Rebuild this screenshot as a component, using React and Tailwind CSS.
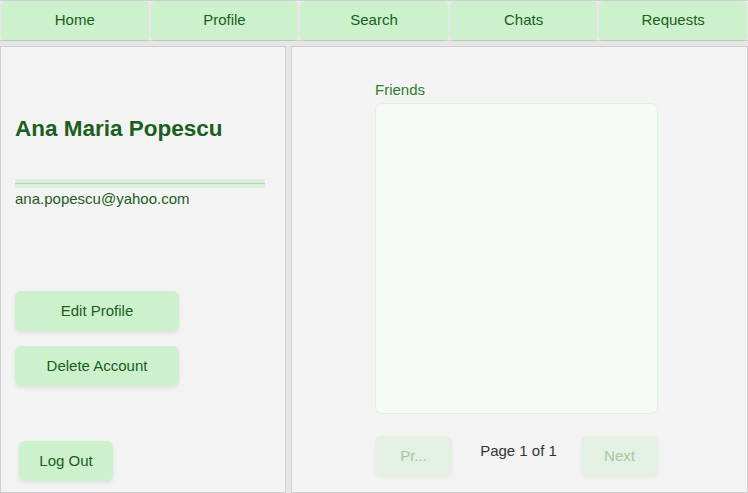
import React from 'react';

const navItems = ['Home', 'Profile', 'Search', 'Chats', 'Requests'];

export default function App() {
  return (
    <div className="h-[493px] overflow-hidden flex flex-col bg-[#f3f3f3] font-['Liberation_Sans',Arial,sans-serif] text-[15px]">
      <nav className="flex gap-[2px] px-px h-[41px] border-y border-[#cfcfcf] bg-[#ececec]">
        {navItems.map((item) => (
          <button
            key={item}
            className="flex-1 bg-[#ccf1cc] text-[#1b5e20] rounded-[5px] shadow-[0_1px_2px_rgba(0,0,0,0.08)]"
          >
            {item}
          </button>
        ))}
      </nav>

      <div className="flex-1 flex gap-[5px] pt-[5px] bg-[#e6e6e6]">
        {/* profile side */}
        <div className="w-[286px] border border-[#cfcfcf] bg-[#f3f3f3] pl-[14px] pt-[68px] flex flex-col">
          <h2 className="text-[22.5px] font-bold text-[#1b5e20] leading-[28px]">Ana Maria Popescu</h2>
          <div className="mt-[36px] w-[250px] h-[9px] bg-[#d9f2d9] flex items-center">
            <div className="w-full h-px bg-[#c8c8c8]" />
          </div>
          <p className="mt-[2px] text-[#1b5e20] leading-[18px]">ana.popescu@yahoo.com</p>

          <div className="mt-[83px] flex flex-col gap-[15px] items-start">
            <button className="w-[164px] h-[40px] bg-[#ccf1cc] text-[#1b5e20] rounded-[6px] shadow-[0_2px_4px_rgba(0,0,0,0.08)]">
              Edit Profile
            </button>
            <button className="w-[164px] h-[40px] bg-[#ccf1cc] text-[#1b5e20] rounded-[6px] shadow-[0_2px_4px_rgba(0,0,0,0.08)]">
              Delete Account
            </button>
          </div>

          <button className="mt-[55px] ml-[4px] w-[94px] h-[40px] bg-[#ccf1cc] text-[#1b5e20] rounded-[6px] shadow-[0_2px_4px_rgba(0,0,0,0.08)]">
            Log Out
          </button>
        </div>

        {/* friends side */}
        <div className="flex-1 border border-[#cfcfcf] bg-[#f3f3f3] pl-[83px] pt-[34px]">
          <p className="text-[#2e7d32] leading-[18px]">Friends</p>
          <div className="mt-[4px] w-[283px] h-[311px] bg-[#f6faf6] border border-[#ddf3dd] rounded-[7px]" />
          <div className="mt-[22px] w-[283px] flex items-start justify-between">
            <button className="w-[77px] h-[40px] bg-[#e3f0e3] text-[#a3c8a3] rounded-[6px] shadow-[0_2px_4px_rgba(0,0,0,0.04)]">
              Pr...
            </button>
            <span className="mt-[6px] ml-[4px] text-[#333] leading-[18px]">Page 1 of 1</span>
            <button className="w-[77px] h-[40px] bg-[#e3f0e3] text-[#a3c8a3] rounded-[6px] shadow-[0_2px_4px_rgba(0,0,0,0.04)]">
              Next
            </button>
          </div>
        </div>
      </div>
    </div>
  );
}
